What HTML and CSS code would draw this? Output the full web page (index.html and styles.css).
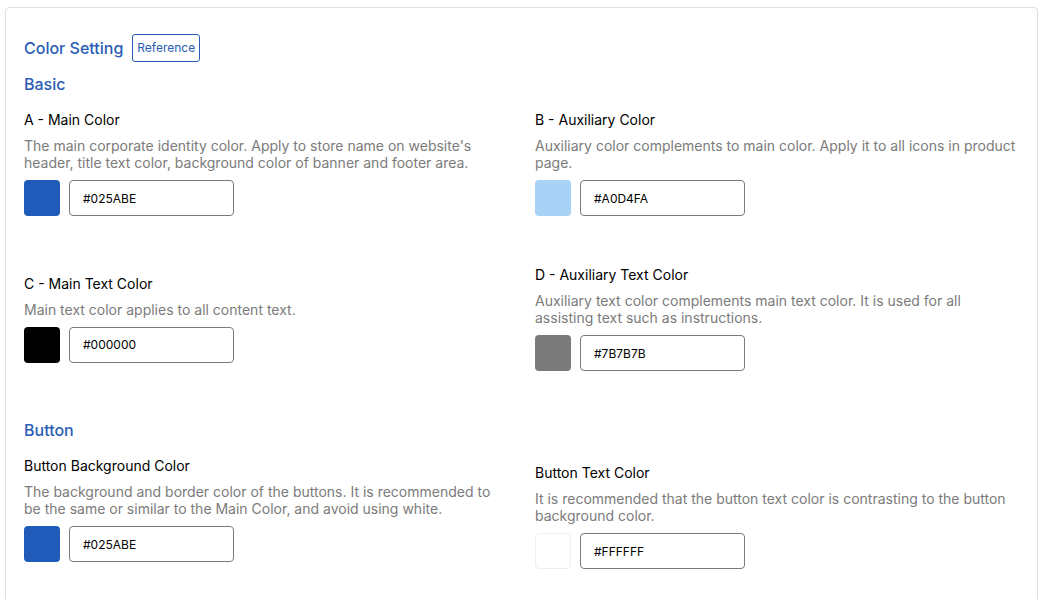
FILE: index.html
```html
<!DOCTYPE html>
<html lang="en">
<head>
<meta charset="utf-8">
<title>Color Setting</title>
<link rel="stylesheet" href="styles.css">
</head>
<body>
<div class="card">
  <div class="page-head">
    <h1 class="page-title">Color Setting</h1>
    <button class="ref-btn" type="button">Reference</button>
  </div>

  <h2 class="section-title">Basic</h2>
  <div class="row">
    <div class="field">
      <div class="field-label">A - Main Color</div>
      <p class="field-desc">The main corporate identity color. Apply to store name on website's header, title text color, background color of banner and footer area.</p>
      <div class="picker">
        <span class="swatch swatch--blue"></span>
        <input class="hex" type="text" value="#025ABE">
      </div>
    </div>
    <div class="field">
      <div class="field-label">B - Auxiliary Color</div>
      <p class="field-desc">Auxiliary color complements to main color. Apply it to all icons in product page.</p>
      <div class="picker">
        <span class="swatch swatch--light"></span>
        <input class="hex" type="text" value="#A0D4FA">
      </div>
    </div>
  </div>

  <div class="row row--center row--spaced">
    <div class="field">
      <div class="field-label">C - Main Text Color</div>
      <p class="field-desc">Main text color applies to all content text.</p>
      <div class="picker">
        <span class="swatch swatch--black"></span>
        <input class="hex" type="text" value="#000000">
      </div>
    </div>
    <div class="field">
      <div class="field-label">D - Auxiliary Text Color</div>
      <p class="field-desc">Auxiliary text color complements main text color. It is used for all assisting text such as instructions.</p>
      <div class="picker">
        <span class="swatch swatch--gray"></span>
        <input class="hex" type="text" value="#7B7B7B">
      </div>
    </div>
  </div>

  <h2 class="section-title section-title--spaced">Button</h2>
  <div class="row">
    <div class="field">
      <div class="field-label">Button Background Color</div>
      <p class="field-desc">The background and border color of the buttons. It is recommended to be the same or similar to the Main Color, and avoid using white.</p>
      <div class="picker">
        <span class="swatch swatch--blue"></span>
        <input class="hex" type="text" value="#025ABE">
      </div>
    </div>
    <div class="field field--shift">
      <div class="field-label">Button Text Color</div>
      <p class="field-desc">It is recommended that the button text color is contrasting to the button background color.</p>
      <div class="picker">
        <span class="swatch swatch--white"></span>
        <input class="hex" type="text" value="#FFFFFF">
      </div>
    </div>
  </div>
</div>
</body>
</html>
```

FILE: styles.css
```css
* { box-sizing: border-box; }

html, body {
  margin: 0;
  padding: 0;
  background: #ffffff;
}

body {
  font-family: Inter, "Noto Sans", "Liberation Sans", sans-serif;
  color: #000000;
  overflow: hidden;
  height: 599px;
}

.card {
  margin: 7px 2px 0 5px;
  border: 1px solid #dedede;
  border-radius: 4px;
  padding: 26px 18px 40px 18px;
  min-height: 700px;
}

.page-head {
  display: flex;
  align-items: center;
  gap: 9px;
  height: 28px;
}

.page-title {
  margin: 0;
  font-size: 16px;
  font-weight: 500;
  line-height: 20px;
  color: #2a5db5;
}

.ref-btn {
  font-family: inherit;
  font-size: 12px;
  line-height: 16px;
  color: #2a5db5;
  background: #ffffff;
  border: 1px solid #2a5db5;
  border-radius: 3px;
  height: 28px;
  padding: 0 4px;
  cursor: pointer;
}

.section-title {
  margin: 12px 0 16px 0;
  font-size: 16px;
  font-weight: 500;
  line-height: 20px;
  color: #2a5db5;
}

.section-title--spaced {
  margin-top: 49px;
}

.row {
  display: grid;
  grid-template-columns: 1fr 1fr;
  column-gap: 27px;
  align-items: start;
}

.row--center { align-items: center; }

.row--spaced { margin-top: 49px; }

.field--shift { padding-top: 7px; }

.field-label {
  font-size: 14px;
  line-height: 20px;
  color: #000000;
}

.field-desc {
  margin: 7px 0 9px 0;
  font-size: 14px;
  line-height: 17px;
  color: #7b7b7b;
}

.picker {
  display: flex;
  align-items: center;
  gap: 9px;
}

.swatch {
  display: block;
  width: 36px;
  height: 36px;
  border-radius: 4px;
}

.swatch--blue { background: #205bb9; }
.swatch--light { background: #a9d3f6; }
.swatch--black { background: #000000; }
.swatch--gray { background: #7b7b7b; }
.swatch--white {
  background: #ffffff;
  border: 1px solid #eeeeee;
}

.hex {
  width: 165px;
  height: 36px;
  border: 1px solid #7a7a7a;
  border-radius: 4px;
  padding: 0 13px;
  font-family: inherit;
  font-size: 12px;
  color: #000000;
  background: #ffffff;
  outline: none;
}
```
